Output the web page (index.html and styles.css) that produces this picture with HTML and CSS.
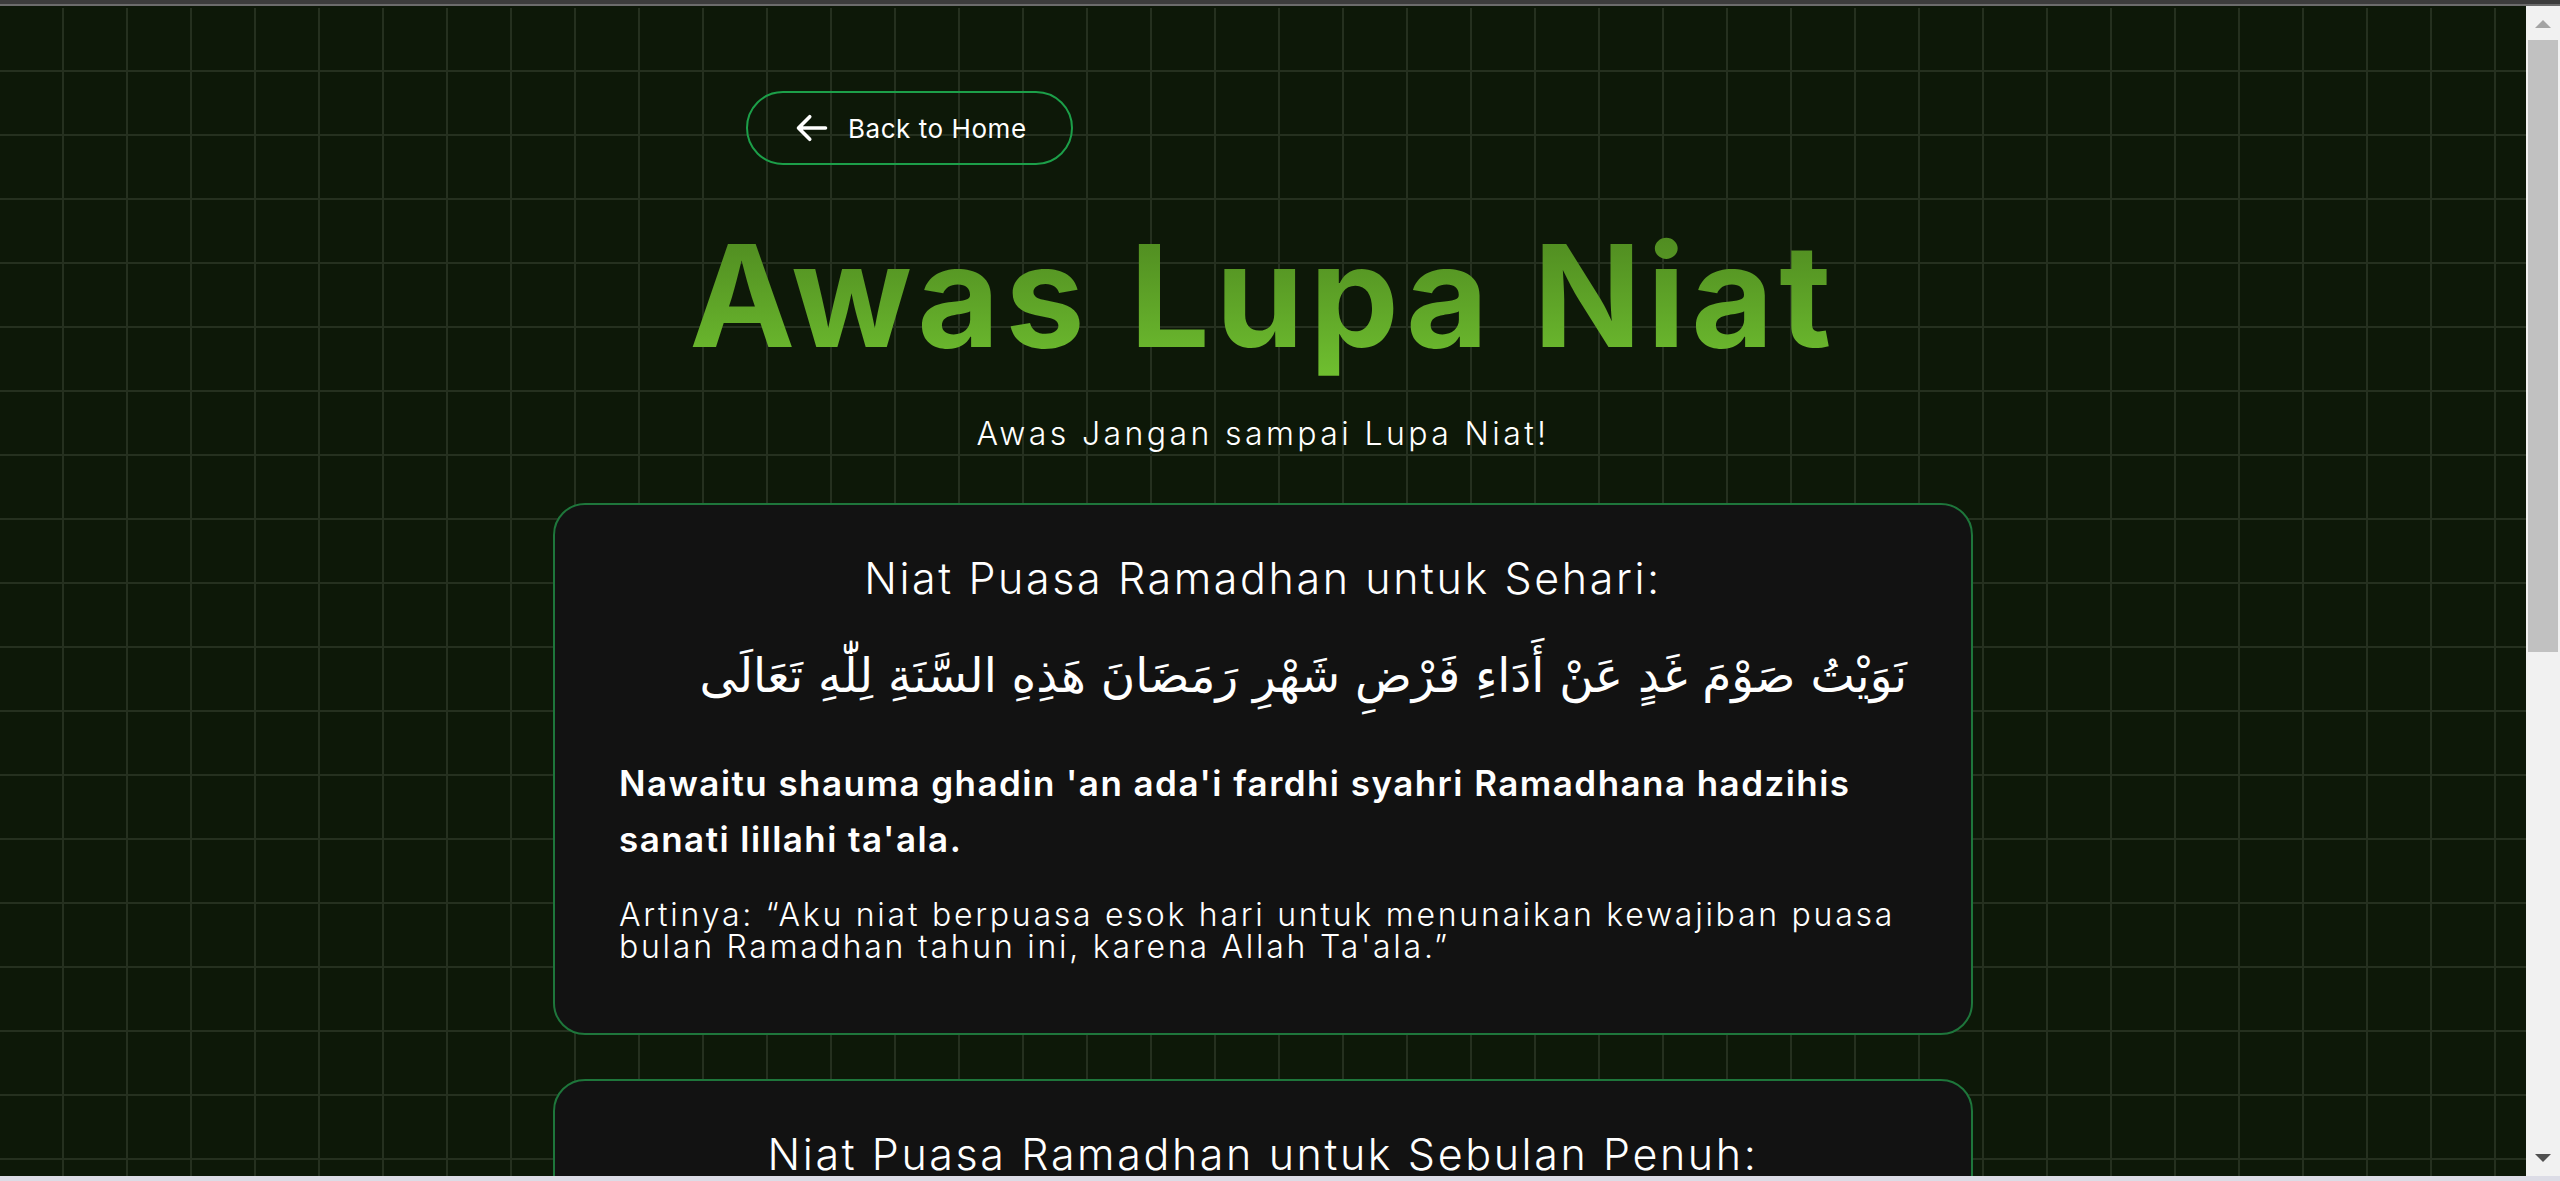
FILE: index.html
```html
<!DOCTYPE html>
<html lang="id">
<head>
<meta charset="utf-8">
<title>Awas Lupa Niat</title>
<link rel="stylesheet" href="styles.css">
</head>
<body>
<div class="topbar"></div>
<div class="screen">
  <main class="page">
    <div class="back-row">
      <a class="back-btn" href="#">
        <svg class="back-icon" viewBox="0 0 24 24" fill="none" stroke="currentColor" stroke-width="2.4" stroke-linecap="round" stroke-linejoin="round"><path d="M10.5 19.5 3 12m0 0 7.5-7.5M3 12h18"/></svg>
        <span>Back to Home</span>
      </a>
    </div>
    <h1 class="title">Awas Lupa Niat</h1>
    <p class="subtitle">Awas Jangan sampai Lupa Niat!</p>

    <section class="card">
      <h2 class="card-title">Niat Puasa Ramadhan untuk Sehari:</h2>
      <p class="arabic" dir="rtl" lang="ar">نَوَيْتُ صَوْمَ غَدٍ عَنْ أَدَاءِ فَرْضِ شَهْرِ رَمَضَانَ هَذِهِ السَّنَةِ لِلّٰهِ تَعَالَى</p>
      <p class="latin">Nawaitu shauma ghadin 'an ada'i fardhi syahri Ramadhana hadzihis sanati lillahi ta'ala.</p>
      <p class="meaning">Artinya: “Aku niat berpuasa esok hari untuk menunaikan kewajiban puasa bulan Ramadhan tahun ini, karena Allah Ta'ala.”</p>
    </section>

    <section class="card">
      <h2 class="card-title">Niat Puasa Ramadhan untuk Sebulan Penuh:</h2>
      <p class="arabic" dir="rtl" lang="ar">نَوَيْتُ صَوْمَ جَمِيْعِ شَهْرِ رَمَضَانِ هَذِهِ السَّنَةِ تَقْلِيْدًا لِلْإِمَامِ مَالِكٍ فَرْضًا لِلّٰهِ تَعَالَى</p>
      <p class="latin">Nawaitu shauma jami'i syahri Ramadhana hadzihis sanati taqlidan lil imami Maliki fardhan lillahi ta'ala.</p>
      <p class="meaning">Artinya: “Aku niat berpuasa di sepanjang bulan Ramadhan tahun ini dengan mengikuti Imam Malik, fardhu karena Allah Ta'ala.”</p>
    </section>
  </main>
</div>
<div class="scrollbar" aria-hidden="true">
  <div class="sb-btn"><span class="sb-arrow-up"></span></div>
  <div class="sb-track"><div class="sb-thumb"></div></div>
  <div class="sb-btn sb-btn-down"><span class="sb-arrow-down"></span></div>
</div>
<div class="screen-edge"></div>
</body>
</html>
```
FILE: styles.css
```css
html {
  background: #0d1808;
  overflow: hidden;
}

body {
  margin: 0;
  font-family: Inter, "Noto Sans", sans-serif;
  color: #ffffff;
}

.topbar {
  height: 4px;
  background: #3c3c3c;
  border-bottom: 2px solid #6c6c6c;
}

.screen {
  margin-right: 34px;
  background-color: #0d1808;
  background-image:
    linear-gradient(#0d1808, #0d1808),
    linear-gradient(to right, #25301f 2px, transparent 2px),
    linear-gradient(to bottom, #25301f 2px, transparent 2px);
  background-size: 100% 2px, 64px 64px, 64px 64px;
  background-position: 0 0, 62px 0, 0 0;
  background-repeat: no-repeat, repeat, repeat;
}

.page {
  width: 1420px;
  margin: 0 auto;
  padding: 85px 0 440px;
}

.back-row {
  width: 1034px;
  margin: 0 auto;
  display: flex;
}

.back-btn {
  display: inline-flex;
  align-items: center;
  gap: 18px;
  height: 74px;
  box-sizing: border-box;
  padding: 0 44px 0 46px;
  border: 2px solid #1c9f49;
  border-radius: 999px;
  color: #ffffff;
  text-decoration: none;
  font-size: 26px;
  font-weight: 400;
  letter-spacing: 0.55px;
}

.back-icon {
  width: 36px;
  height: 36px;
  flex: none;
}

.title {
  margin: 35px 0 0;
  text-align: center;
  font-size: 142px;
  line-height: 190px;
  font-weight: 700;
  letter-spacing: 5.6px;
  background: linear-gradient(180deg, #487f1d 0%, #72c431 100%);
  -webkit-background-clip: text;
  background-clip: text;
  color: transparent;
}

.subtitle {
  margin: 20px 0 0;
  text-align: center;
  font-size: 32px;
  line-height: 48px;
  font-weight: 300;
  letter-spacing: 3.4px;
}

.card {
  margin-top: 45px;
  padding: 43px 64px 70px;
  background: #121212;
  border: 2px solid #1e763b;
  border-radius: 32px;
}

.card + .card {
  margin-top: 44px;
}

.card-title {
  margin: 0;
  text-align: center;
  font-size: 43px;
  line-height: 60px;
  font-weight: 300;
  letter-spacing: 2.6px;
}

.arabic {
  margin: 28px 0 0;
  font-family: "DejaVu Sans", sans-serif;
  font-size: 47px;
  line-height: 80px;
  text-align: right;
}

.latin {
  margin: 39px 0 0;
  font-size: 35px;
  line-height: 56px;
  font-weight: 600;
  letter-spacing: 1.45px;
}

.meaning {
  margin: 32px 0 0;
  font-size: 32px;
  line-height: 32px;
  font-weight: 300;
  letter-spacing: 2.75px;
}

.scrollbar {
  position: fixed;
  top: 6px;
  right: 0;
  bottom: 5px;
  width: 34px;
  display: flex;
  flex-direction: column;
  background: #f1f1f1;
}

.sb-btn {
  height: 34px;
  flex: none;
  display: flex;
  justify-content: center;
  align-items: flex-start;
}

.sb-arrow-up {
  margin-top: 14px;
  width: 0;
  height: 0;
  border-left: 8px solid transparent;
  border-right: 8px solid transparent;
  border-bottom: 8px solid #a3a3a3;
}

.sb-arrow-down {
  margin-top: 12px;
  width: 0;
  height: 0;
  border-left: 8px solid transparent;
  border-right: 8px solid transparent;
  border-top: 8px solid #505050;
}

.sb-track {
  flex: 1;
  padding: 0 2px;
}

.sb-thumb {
  height: 612px;
  background: #c1c1c1;
}

.screen-edge {
  position: fixed;
  left: 0;
  right: 0;
  bottom: 0;
  height: 5px;
  background: #dcdce6;
}
```
